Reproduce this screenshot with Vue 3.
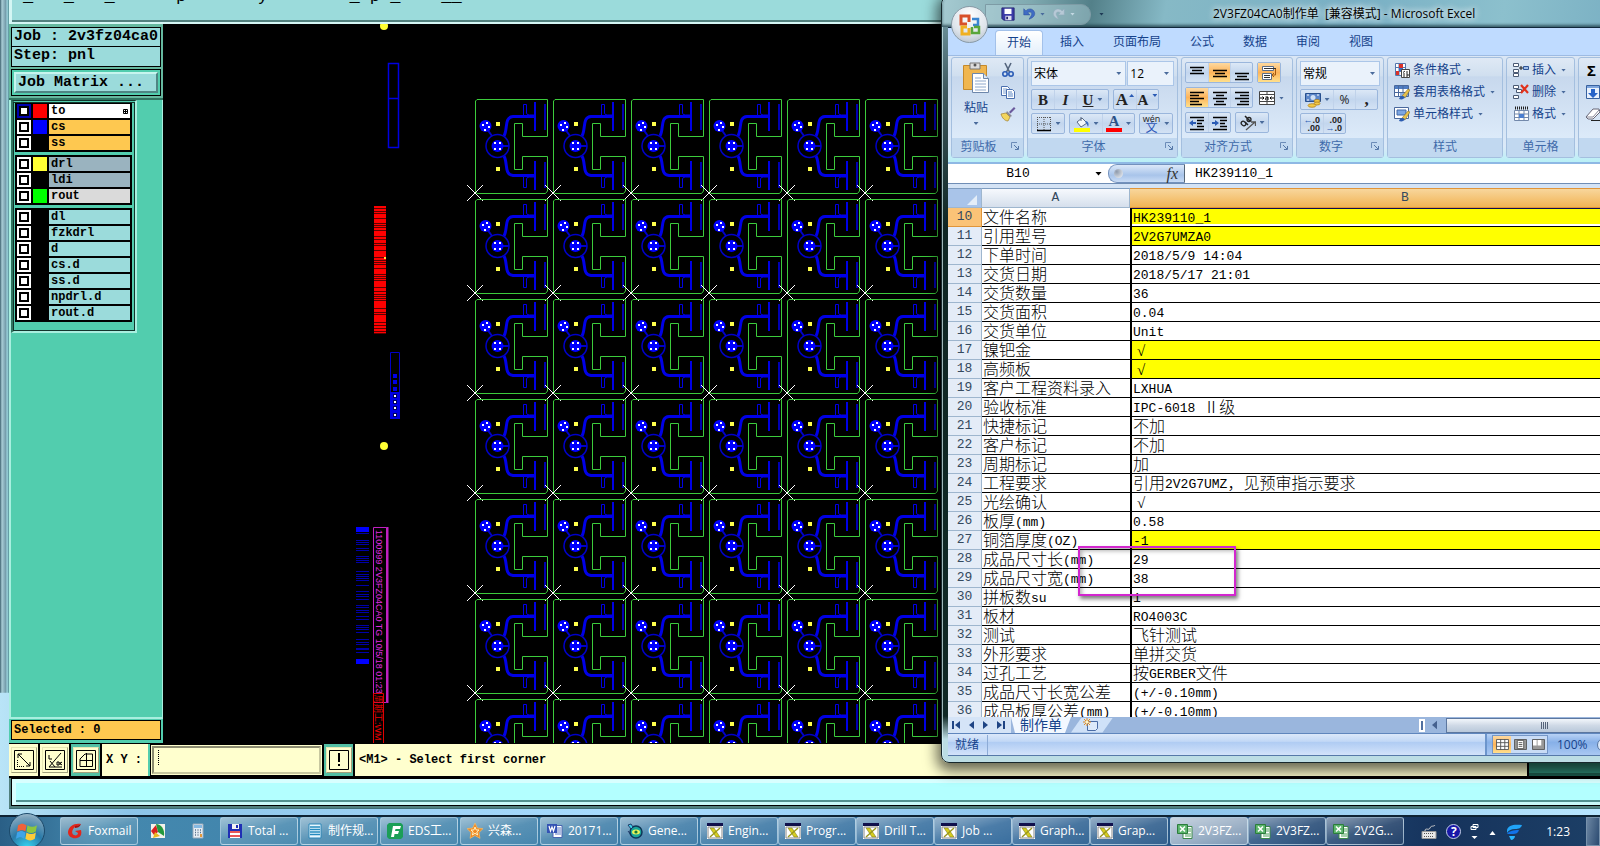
<script setup>
import { ref } from 'vue';

const layerGroups = [
  [
    { name: 'to', color: '#ff0000', tone: 'white', active: true },
    { name: 'cs', color: '#0000ff', tone: 'amber' },
    { name: 'ss', color: '#000000', tone: 'amber' },
  ],
  [
    { name: 'drl', color: '#ffff33', tone: 'slate' },
    { name: 'ldi', color: '#000000', tone: 'slate' },
    { name: 'rout', color: '#00ff00', tone: 'grey' },
  ],
  ['dl', 'fzkdrl', 'd', 'cs.d', 'ss.d', 'npdrl.d', 'rout.d'].map(name => ({
    name,
    color: '#000000',
    tone: 'aqua',
  })),
];

// panel array: 78 x 100 step and repeat
const cells = [];
for (let row = 0; row < 7; row++) {
  for (let col = 0; col < 6; col++) {
    cells.push({ x: 475 + col * 78, y: 99 + row * 100 });
  }
}

const redGaps = [208, 211, 213, 218, 223, 225, 227, 230, 236, 239, 243, 245, 250, 257, 260, 262, 264, 268, 274, 276, 278, 280, 287, 291, 294, 296, 298, 300, 308, 312, 314, 322, 325, 328, 331, 333];
const blueBars = [533, 540, 542, 544, 548, 550, 556, 558, 560, 562, 571, 574, 576, 578, 580, 585, 591, 594, 596, 599, 605, 607, 610, 612, 616, 619, 625, 627, 629, 632, 639, 642, 644, 648, 649, 652];

const rows = [
  ['文件名称', 'HK239110_1', true],
  ['引用型号', '2V2G7UMZA0', true],
  ['下单时间', '2018/5/9 14:04'],
  ['交货日期', '2018/5/17 21:01'],
  ['交货数量', '36'],
  ['交货面积', '0.04'],
  ['交货单位', 'Unit'],
  ['镍钯金', '√', true],
  ['高频板', '√', true],
  ['客户工程资料录入', 'LXHUA'],
  ['验收标准', 'IPC-6018 Ⅱ级'],
  ['快捷标记', '不加'],
  ['客户标记', '不加'],
  ['周期标记', '加'],
  ['工程要求', '引用2V2G7UMZ，见预审指示要求'],
  ['光绘确认', '√'],
  ['板厚(mm)', '0.58'],
  ['铜箔厚度(OZ)', '-1', true],
  ['成品尺寸长(mm)', '29'],
  ['成品尺寸宽(mm)', '38'],
  ['拼板数su', '1'],
  ['板材', 'RO4003C'],
  ['测试', '飞针测试'],
  ['外形要求', '单拼交货'],
  ['过孔工艺', '按GERBER文件'],
  ['成品尺寸长宽公差', '(+/-0.10mm)'],
  ['成品板厚公差(mm)', '(+/-0.10mm)'],
].map(([label, value, marked], index) => ({
  number: index + 10,
  label: split(label),
  value: split(value),
  marked,
}));

// latin runs are set half as wide as the ideographs
function split(text) {
  return text
    .match(/[\x20-\x7e]+|[^\x20-\x7e]+/g)
    .map(part => ({ part, half: /^[\x20-\x7e]/.test(part), check: part === '√' }));
}

const tabs = ['开始', '插入', '页面布局', '公式', '数据', '审阅', '视图'];

const styleCommands = [
  { icon: 'cond', text: '条件格式' },
  { icon: 'tablefmt', text: '套用表格格式' },
  { icon: 'cellstyle', text: '单元格样式' },
];
const cellCommands = [
  { icon: 'insert', text: '插入' },
  { icon: 'delete', text: '删除' },
  { icon: 'format', text: '格式' },
];

const tasks = [
  [{ icon: 'foxmail', text: 'Foxmail' }],
  [{ icon: 'pie', bare: true }],
  [{ icon: 'calc', bare: true }],
  [{ icon: 'disk', text: 'Total ...' }],
  [{ icon: 'list', text: '制作规...' }],
  [{ icon: 'eds', text: 'EDS工...' }],
  [{ icon: 'star', text: '兴森...' }],
  [{ icon: 'word', text: '20171...' }],
  [{ icon: 'gene', text: 'Gene...' }],
  ['Engin...', 'Progr...', 'Drill T...', 'Job ...', 'Graph...', 'Grap...'].map(text => ({ icon: 'xwin', text })),
  [
    { icon: 'excel', text: '2V3FZ...', current: true },
    { icon: 'excel', text: '2V3FZ...' },
    { icon: 'excel', text: '2V2G...' },
  ],
];

const xy = ref('');
const cellName = ref('B10');
const formula = ref('HK239110_1');
</script>

<template>
  <svg class="sprite" aria-hidden="true">
    <symbol id="save" viewBox="0 0 16 16"><path d="M1 1h14v14H3l-2-2z" fill="#3b3ba8" stroke="#24246e" /><path d="M4 2h8v6H4z" fill="#fff" /><path d="M5 10h7v5H5z" fill="#dde" /><path d="M6 11h2v3H6z" fill="#24246e" /></symbol>
    <symbol id="undo" viewBox="0 0 16 16"><path d="M2 2v7h7L6.500 6.500c3-2 6 0 4 3.500l-2.500 4c6-2 8-6 5.500-9.500S6 2 4.500 4.500z" fill="#3f6cc4" stroke="#2c4f9c" stroke-width=".6" /></symbol>
    <symbol id="redo" viewBox="0 0 16 16"><path d="M14 2v7H7l2.500-2.500c-3-2-6 0-4 3.500l2 4C2 12 0 8 2.500 4.500s7.500-2.500 9 0z" fill="#b7c9d6" stroke="#8fa9ba" stroke-width=".6" /></symbol>
    <symbol id="cut" viewBox="0 0 16 16"><path d="M5 1l4.500 9M11 1L6.500 10" stroke="#54657d" stroke-width="1.600" /><circle cx="5" cy="12" r="2.200" fill="none" stroke="#2a5bb5" stroke-width="1.600" /><circle cx="11" cy="12" r="2.200" fill="none" stroke="#2a5bb5" stroke-width="1.600" /></symbol>
    <symbol id="copy" viewBox="0 0 16 16"><path d="M1.500 2.500h6l2 2v7h-8z" fill="#fff" stroke="#4a6fae" /><path d="M3 5h4M3 7h5M3 9h5" stroke="#7c9fd0" /><path d="M6.500 5.500h6l2 2v7h-8z" fill="#fff" stroke="#4a6fae" /><path d="M8 8h4M8 10h5M8 12h5" stroke="#5b86c4" /></symbol>
    <symbol id="brush" viewBox="0 0 16 16"><path d="M9 6l5-5 1.500 1.500-5 5z" fill="#6b5a9c" /><path d="M7 5l5 5-2 1-4-4z" fill="#8a8a95" /><path d="M1 8l5-1 4 4-2 4c-3 0-6-3-7-7z" fill="#f2d55e" stroke="#a08030" stroke-width=".7" /></symbol>
    <symbol id="paste" viewBox="0 0 28 32"><path d="M1.500 3.500h23v24h-23z" fill="#f0b64f" stroke="#c58a2c" /><path d="M8 1h10v6H8z" fill="#dcdcdc" stroke="#777" /><circle cx="13" cy="3" r="1.500" fill="#555" /><path d="M10.500 11.500h11l5 5v14h-16z" fill="#fff" stroke="#6d87ab" /><path d="M21.500 11.500v5h5" fill="#dbe6f4" stroke="#6d87ab" /><path d="M13 16h6M13 19h11M13 22h11M13 25h11M13 28h11" stroke="#8fa9cc" /></symbol>
    <symbol id="borders" viewBox="0 0 16 16"><path d="M1.500 1v13M8 1v13M14.500 1v13M1 1.500h14M1 8h14" stroke="#555" stroke-dasharray="1 1" fill="none" /><path d="M1 14.500h14" stroke="#000" stroke-width="1.500" /></symbol>
    <symbol id="fill" viewBox="0 0 16 16"><path d="M3 6l5-4 5 5-6 4z" fill="#f4f7fb" stroke="#596b84" /><path d="M7 5V1" stroke="#596b84" /><path d="M12 5c3 1 3 4 2 6-1-2-1-4-3-5z" fill="#3a6cc0" /><path d="M0 12h16v4H0z" fill="#ff0" /></symbol>
    <symbol id="lines-top" viewBox="0 0 16 16"><path d="M1 2.500h14M3 5.500h10M1 8.500h14" stroke="#000" stroke-width="1.500" /></symbol>
    <symbol id="lines-mid" viewBox="0 0 16 16"><path d="M1 5.500h14M3 8.500h10M1 11.500h14" stroke="#000" stroke-width="1.500" /></symbol>
    <symbol id="lines-low" viewBox="0 0 16 16"><path d="M1 8.500h14M3 11.500h10M1 14.500h14" stroke="#000" stroke-width="1.500" /></symbol>
    <symbol id="lines-left" viewBox="0 0 16 16"><path d="M1 2.500h14M1 5.500h9M1 8.500h14M1 11.500h9M1 14.500h12" stroke="#000" stroke-width="1.500" /></symbol>
    <symbol id="lines-center" viewBox="0 0 16 16"><path d="M1 2.500h14M4 5.500h8M1 8.500h14M4 11.500h8M2 14.500h12" stroke="#000" stroke-width="1.500" /></symbol>
    <symbol id="lines-right" viewBox="0 0 16 16"><path d="M1 2.500h14M6 5.500h9M1 8.500h14M6 11.500h9M3 14.500h12" stroke="#000" stroke-width="1.500" /></symbol>
    <symbol id="wrap" viewBox="0 0 16 16"><path d="M1.500 1.500h11v4h-11zM1.500 8.500h9v6h-9z" fill="#fff" stroke="#5b6d88" /><path d="M3 3.500h12M3 10.500h6M3 12.500h6" stroke="#333" /><path d="M14.500 4v6h-3M13 8l-2 2 2 2" fill="none" stroke="#a55a10" /></symbol>
    <symbol id="merge" viewBox="0 0 16 16"><path d="M.5 1.500h15v13H.5zM0 4.500h16M0 11.500h16M8 1v3M8 12v3" fill="#fff" stroke="#444" /><path d="M1 8h4M15 8h-4M3.500 6.500L5 8 3.500 9.500M12.500 6.500L11 8l1.500 1.500" fill="none" stroke="#000" /><path d="M6.500 7h2.500v3H7.500q-1 0-1-1t1-1H9" fill="none" stroke="#000" /></symbol>
    <symbol id="outdent" viewBox="0 0 16 16"><path d="M1 2.500h14M8 5.500h7M8 8.500h5M8 11.500h7M1 14.500h14" stroke="#000" stroke-width="1.300" /><path d="M0 8l4-3v2h3v2H4v2z" fill="#2a5bb5" /></symbol>
    <symbol id="indent" viewBox="0 0 16 16"><path d="M1 2.500h14M8 5.500h7M8 8.500h5M8 11.500h7M1 14.500h14" stroke="#000" stroke-width="1.300" /><path d="M7 8L3 5v2H0v2h3v2z" fill="#2a5bb5" /></symbol>
    <symbol id="orient" viewBox="0 0 16 16"><path d="M6 15L15 7M11 7h4.500v4" fill="none" stroke="#555" stroke-width="1.300" /><ellipse cx="3.500" cy="8.500" rx="2" ry="2.500" fill="none" stroke="#222" stroke-width="1.300" transform="rotate(-45 3.500 8.500)" /><path d="M5 7l3 3M5 1l5 5" stroke="#222" stroke-width="1.500" /><circle cx="9" cy="4.500" r="2" fill="none" stroke="#222" stroke-width="1.300" /></symbol>
    <symbol id="money" viewBox="0 0 16 16"><path d="M.5 1.500h15v8H.5z" fill="#5c86c8" stroke="#28508f" /><circle cx="8" cy="5.500" r="2.500" fill="#cfe0f6" /><path d="M2 3h2M12 3h2M2 8h2" stroke="#fff" /><ellipse cx="12" cy="9" rx="3" ry="1.500" fill="#f4cb47" stroke="#a87818" stroke-width=".7" /><ellipse cx="12" cy="11.500" rx="3" ry="1.500" fill="#f4cb47" stroke="#a87818" stroke-width=".7" /><ellipse cx="7" cy="13.500" rx="4" ry="1.800" fill="#f4cb47" stroke="#a87818" stroke-width=".7" /></symbol>
    <symbol id="cond" viewBox="0 0 16 16"><path d="M1.500 1.500h10v12h-10zM5 1v13M8.500 1v13M1 5.500h11M1 9.500h11" fill="#fff" stroke="#5476ac" /><path d="M5 2h4v4H5zM2 9h3v4H2z" fill="#d9322a" /><path d="M5 6h4v3H5z" fill="#3469c4" /><path d="M7.500 7.500h8v8h-8z" fill="#fff" stroke="#444" /><path d="M9 10.500l2-1.500M9 12h2M12 10h2M12 12h2v2h-2M9 14h2" stroke="#222" fill="none" /></symbol>
    <symbol id="tablefmt" viewBox="0 0 16 16"><path d="M.5 1.500h14v11H.5z" fill="#fff" stroke="#49689c" /><path d="M1 2h13v3H1z" fill="#4f7cc2" /><path d="M4.500 2v10M9 2v10M1 8.500h13" stroke="#49689c" /><path d="M6 9h8v3H6z" fill="#8fb2e4" /><path d="M8 12l6-7 2 1-5 8z" fill="#e8c24a" stroke="#7c6322" stroke-width=".5" /><path d="M5 15c1-3 3-4 6-2-1 2-3 3-6 2z" fill="#2b5cb0" /></symbol>
    <symbol id="cellstyle" viewBox="0 0 16 16"><path d="M.5 1.500h14v11H.5z" fill="#fff" stroke="#49689c" /><path d="M3 4h9v5H3z" fill="#7ca6e2" stroke="#3f66a6" /><path d="M8 12l6-7 2 1-5 8z" fill="#e8c24a" stroke="#7c6322" stroke-width=".5" /><path d="M5 15c1-3 3-4 6-2-1 2-3 3-6 2z" fill="#2b5cb0" /></symbol>
    <symbol id="insert" viewBox="0 0 16 16"><path d="M.5 1.500h5v3h-5zM.5 7.500h5v3h-5zM.5 11.500h5v3h-5z" fill="#fff" stroke="#4a5a74" /><path d="M10.500 4.500h5v3h-5z" fill="#9dbdea" stroke="#2f5596" /><path d="M6 6h4M8 4v4" stroke="#222" /></symbol>
    <symbol id="delete" viewBox="0 0 16 16"><path d="M.5 1.500h5v3h-5zM3.500 5.500h5v3h-5zM.5 11.500h5v3h-5z" fill="#fff" stroke="#4a5a74" /><path d="M8 1l7 8M15 1L8 9" stroke="#e0321c" stroke-width="2.200" /></symbol>
    <symbol id="format" viewBox="0 0 16 16"><path d="M2 2h13" stroke="#222" stroke-dasharray="1 1" stroke-width="3" /><path d="M1.500 4.500h14v10h-14zM6 4v11M11 4v11M1 8h14M1 11.500h14" fill="#fff" stroke="#7389ab" /><path d="M6 8h5v4H6z" fill="#4c7fd0" /></symbol>
    <symbol id="filldown" viewBox="0 0 16 16"><path d="M1.500 1.500h13v13h-13z" fill="#e9f1fc" stroke="#38619f" /><path d="M2 2h12v2H2z" fill="#7ea5dd" /><path d="M6 5h4v4h3l-5 5-5-5h3z" fill="#2864c8" /></symbol>
    <symbol id="eraser" viewBox="0 0 16 16"><path d="M1 11l7-8h6l1 3-7 7H3z" fill="#fff" stroke="#667" /><path d="M2 11h6l6-7" fill="none" stroke="#889" /><path d="M6 14.500h10" stroke="#222" /></symbol>
    <symbol id="launcher" viewBox="0 0 8 8"><path d="M.5 6V.5H6" fill="none" stroke="#6c8cb8" /><path d="M3 3l4 4M7.500 4v3.500H4" fill="none" stroke="#5577a8" /></symbol>
    <symbol id="foxmail" viewBox="0 0 16 16"><path d="M14 1C7 0 2 3 1 9c0 5 5 7 9 6 4-1 5-4 4-8L8 8l3 2c0 2-2 3-4 2-3-1-2-6 1-8z" fill="#e1261c" /><path d="M8 3c2 0 4-1 6-2-1 3-4 4-6 4z" fill="#a81010" /></symbol>
    <symbol id="pie" viewBox="0 0 16 16"><path d="M1 1h14v14H1z" fill="#f4f2ea" /><path d="M1 8L6 2l2 7-4 3z" fill="#d82020" /><path d="M6 1c5 0 9 5 8 12L8 9z" fill="#24983c" /><path d="M5 9l5 4-7 2z" fill="#e9b820" /></symbol>
    <symbol id="calc" viewBox="0 0 16 16"><path d="M3 1h10v14H3z" fill="#e8eef4" stroke="#9ab" /><path d="M4 2h8v3H4z" fill="#86b9e2" /><path d="M5 7h1M7.500 7h1M10 7h1M5 9.500h1M7.500 9.500h1M10 9.500h1M5 12h1M7.500 12h1" stroke="#58708a" stroke-width="1.500" /><path d="M10 11h2v3h-2z" fill="#e59a3a" /></symbol>
    <symbol id="disk" viewBox="0 0 16 16"><path d="M1 1h14v14H1z" fill="#1f2fb4" /><path d="M5 1h7v5H5z" fill="#f3f3f3" /><path d="M9 2h2v3H9z" fill="#1f2fb4" /><path d="M3 8h10v7H3z" fill="#fff" /><path d="M3 9h10M3 13h10" stroke="#e02020" stroke-width="1.500" /></symbol>
    <symbol id="list" viewBox="0 0 16 16"><path d="M2 1h12v14H2z" fill="#e9f8ff" stroke="#2c87b8" /><path d="M3 4h10M3 6.500h10M3 9h10M3 11.500h10" stroke="#258abf" stroke-width="1.500" /></symbol>
    <symbol id="eds" viewBox="0 0 16 16"><path d="M2 0h12l2 2v12l-2 2H2l-2-2V2z" fill="#1b9e57" /><path d="M4 14L6 3h8l-1 3H8.500L8 8h4l-1 3H7.500L7 14z" fill="#fff" /></symbol>
    <symbol id="star" viewBox="0 0 16 16"><path d="M8 0l2.400 5 5.600.6-4 4 1 5.800L8 12.600 3 15.400l1-5.800-4-4L5.600 5z" fill="#f08a24" stroke="#ffc46a" stroke-width=".6" /><path d="M8 4l1.200 3H12l-2.200 2 .8 3L8 10.300 5.400 12l.8-3L4 7h2.800z" fill="none" stroke="#fff2c0" /></symbol>
    <symbol id="word" viewBox="0 0 16 16"><path d="M6 2.500h9v12H6z" fill="#fff" stroke="#4865b0" /><path d="M10 5h4M10 7h4M10 9h4M8 11h6" stroke="#5e7ac4" /><path d="M0 1h10v9H0z" fill="#3453b4" /><path d="M2 3l1.500 5L5 4l1.500 4L8 3" fill="none" stroke="#fff" stroke-width="1.200" /></symbol>
    <symbol id="gene" viewBox="0 0 16 16"><circle cx="9" cy="9" r="6" fill="#1ba59a" stroke="#0d3558" stroke-width="1.500" /><ellipse cx="9" cy="9" rx="4" ry="2.500" fill="#e9f25a" /><circle cx="9" cy="9" r="1.600" fill="#137a3a" /><path d="M1 2l3-1 2 3-2 2zM1 8l3 4" fill="#3ecfe8" stroke="#125" stroke-width=".8" /></symbol>
    <symbol id="xwin" viewBox="0 0 16 16"><path d="M0 0h16v16H0z" fill="#fff" /><path d="M0 0h16v3H0z" fill="#10104c" /><path d="M1 4h14v11H1z" fill="#fff" stroke="#888" /><path d="M3 5h4l6 9H9z" fill="#d5cd20" stroke="#6c6a10" stroke-width=".5" /><path d="M13 5L3 14" stroke="#99961c" stroke-width="1.400" /></symbol>
    <symbol id="excel" viewBox="0 0 16 16"><path d="M6 3.500h9v12H6z" fill="#fff" stroke="#3b8a4a" /><path d="M10 6h4M10 8h4M8 11h6M8 13h6" stroke="#4ea35c" /><path d="M.5 1.500h10v9H.5z" fill="#5cb56c" stroke="#2c7c3c" /><path d="M3 3.500l5 5M8 3.500l-5 5" stroke="#fff" stroke-width="1.600" /></symbol>
  </svg>

  <div class="desktop">
    <section class="cad">
      <header class="cad__title">
        <pre>_   _   _      p       y        _ p _    __</pre>
      </header>
      <div class="cad__main">
        <aside class="side">
          <div class="side__job">
            <p>Job : 2v3fz04ca0</p>
            <p>Step: pnl</p>
            <div class="side__matrix"><button type="button">Job Matrix ...</button></div>
          </div>
          <div class="side__well">
            <div class="layers">
              <div v-for="(group, index) in layerGroups" :key="index" class="layers__group">
                <label v-for="layer in group" :key="layer.name" class="layer">
                  <input type="checkbox" :class="{ active: layer.active }">
                  <span class="layer__swatch" :style="{ background: layer.color }"></span>
                  <span class="layer__name" :class="`layer__name--${layer.tone}`">
                    {{ layer.name }}
                    <svg v-if="layer.active" width="5" height="5" viewBox="0 0 5 5"><path d="M.5.5h4v4h-4zM2.500 0v5M0 2.500h5" fill="none" stroke="#000" /></svg>
                  </span>
                </label>
              </div>
            </div>
          </div>
          <p class="side__selected">Selected : 0</p>
        </aside>

        <svg class="board">
          <defs>
            <g id="half-unit" fill="none" stroke="#0000e6">
              <path d="M29 37C33 30 29 18 38 17.500H60" stroke-width="3" />
              <path d="M48.500 18V5.500h3V14q0 2 3 2h6" />
              <path d="M60 3v29" stroke-width="2" />
              <path d="M70 5v26" stroke-width="2" stroke="#0000b4" />
            </g>
            <g id="unit">
              <path d="M2 .5H72.500V37.500H47.500V24.500H39.500V70.500H47.500V57.500H72.500V92L70.500 94.500H2L.5 92V2z" fill="none" stroke="#3ccb3c" />
              <use href="#half-unit" />
              <use href="#half-unit" transform="matrix(1 0 0 -1 0 94)" />
              <path d="M12 30l5 7M22 47h12" stroke="#0000c8" stroke-width="2" />
              <circle cx="22.500" cy="47" r="11.500" fill="none" stroke="#0000c8" stroke-width="1.500" />
              <circle cx="22.500" cy="47" r="6" fill="#00f" />
              <circle cx="10.500" cy="27" r="6" fill="#00f" />
              <path d="M19 43h2v2h-2zM24 43h2v2h-2zM19 49h2v2h-2zM24 49h2v2h-2zM7 25h2v2H7zM11 23h2v2h-2zM13 27h2v2h-2zM9 30h2v2H9z" fill="#fff" />
              <path d="M21 23h4v4h-4zM21 68h4v4h-4z" fill="#ffff4c" />
              <path d="M-8 86L8 102M-8 102L8 86" stroke="#fff" />
            </g>
          </defs>
          <g transform="translate(-163 -24)">
            <circle cx="384" cy="26" r="4" fill="#ffff33" />
            <path d="M388.500 63.500h10v84h-10zM388 98.500h11" fill="none" stroke="#0000e0" stroke-width="1.500" />
            <path d="M374 206h12v128h-12z" fill="#f00" />
            <path v-for="y in redGaps" :key="y" :d="`M374 ${y}.5h12`" stroke="#5c0000" />
            <path d="M384 257h2v2h-2z" fill="#ffe040" />
            <path d="M390.500 352.500h9v66h-9z" fill="none" stroke="#0000c8" />
            <path d="M390 392h10v27h-10zM393 374h4v4h-4zM393 380h4v4h-4zM393 387h4v4h-4z" fill="#0000e6" />
            <path d="M393 394h4v4h-4zM393 400h4v4h-4zM393 406h4v4h-4zM393 413h4v4h-4z" fill="#000060" />
            <path d="M394 395h2v2h-2zM394 401h2v2h-2zM394 407h2v2h-2zM394 414h2v2h-2z" fill="#fff" />
            <circle cx="384" cy="446" r="4" fill="#ffff33" />
            <path d="M356 527h13v5h-13zM356 659h13v5h-13z" fill="#0000ff" />
            <path v-for="y in blueBars" :key="y" :d="`M356 ${y}.5h13`" stroke="#0000a8" />
            <path d="M373.500 527.500h13v175h-13z" fill="none" stroke="#c020c0" />
            <path d="M387.500 527v176" stroke="#c020c0" stroke-width="2" />
            <text class="board__text" transform="translate(376 530) rotate(90)" fill="#e02ce0">1100999 2V3FZ04CA0 TG 10/5/18 01:23</text>
            <path d="M373.500 693.500h10v60h-10z" fill="none" stroke="#e00000" />
            <text class="board__text" transform="translate(375 695) rotate(90)" fill="#f00000">周期工:WM</text>
            <use v-for="cell in cells" :key="`${cell.x}-${cell.y}`" href="#unit" :x="cell.x" :y="cell.y" />
          </g>
        </svg>
      </div>

      <div class="cad__tools">
        <button type="button" class="tool" aria-label="Zoom">
          <svg viewBox="0 0 20 20"><path d="M.5.5h19v19H.5z" fill="none" stroke="#000" /><path d="M4 4l12 12M4 8V4h4M16 12v4h-4" fill="none" stroke="#000" /><path d="M3 16.500h8M3.500 10v7" stroke="#000" stroke-dasharray="1 1" /></svg>
        </button>
        <button type="button" class="tool" aria-label="Angle">
          <svg viewBox="0 0 20 20"><path d="M.5.5h19v19H.5z" fill="none" stroke="#000" /><path d="M16 3L4 17h13M4 5v4h3M5 11l5 6M12 12h2v3h-2zM15 12v3M17 12l-2 1.500 2 1.500" fill="none" stroke="#000" /></svg>
        </button>
        <button type="button" class="tool tool--on" aria-label="Grid">
          <svg viewBox="0 0 20 20"><path d="M.5.5h19v19H.5z" fill="none" stroke="#000" /><path d="M4 9l5-5h7.500v12.500H4zM4 10.500h12.500M10.500 3v14" fill="none" stroke="#000" /></svg>
        </button>
        <label class="cad__xy" for="xy">X Y :</label>
        <div class="cad__entry"><input id="xy" v-model="xy" type="text"><span></span></div>
        <button type="button" class="tool tool--on" aria-label="Alert">
          <svg viewBox="0 0 20 20"><path d="M.5.5h19v19H.5z" fill="none" stroke="#000" /><path d="M9 3h2v9H9zM9 14h2v2H9z" /></svg>
        </button>
        <p class="cad__hint">&lt;M1&gt; - Select first corner</p>
        <div class="cad__corner"></div>
      </div>
      <div class="cad__message"><div></div></div>
    </section>

    <section class="excel">
      <header class="excel__title">
        <div class="qat">
          <button type="button" aria-label="Save"><svg class="i16"><use href="#save" /></svg></button>
          <button type="button" aria-label="Undo"><svg class="i16"><use href="#undo" /></svg><i class="drop"></i></button>
          <button type="button" aria-label="Redo"><svg class="i16"><use href="#redo" /></svg><i class="drop drop--pale"></i></button>
        </div>
        <i class="drop drop--bar"></i>
        <h1>2V3FZ04CA0制作单&nbsp; [兼容模式] - Microsoft Excel</h1>
      </header>
      <button type="button" class="orb" aria-label="Office">
        <svg viewBox="0 0 24 24" fill="none" stroke-width="3">
          <path d="M11 9V3H3v8h6" stroke="#d8502a" /><path d="M14 6h6v6h-5" stroke="#3b86d0" stroke-width="2.500" /><path d="M9 14H4v7h7v-6" stroke="#f0b020" /><path d="M14 14v6h7v-6h-5" stroke="#59a63a" stroke-width="2.500" />
        </svg>
      </button>

      <div class="excel__body">
        <nav class="tabs">
          <a v-for="(tab, index) in tabs" :key="tab" href="#" :class="{ on: index === 0 }">{{ tab }}</a>
        </nav>

        <div class="ribbon">
          <section class="group group--clip">
            <div class="group__body group__body--clip">
              <button type="button" class="paste"><svg><use href="#paste" /></svg>粘贴<i class="drop"></i></button>
              <div class="stack">
                <button type="button" aria-label="剪切"><svg class="i16"><use href="#cut" /></svg></button>
                <button type="button" aria-label="复制"><svg class="i16"><use href="#copy" /></svg></button>
                <button type="button" aria-label="格式刷"><svg class="i16"><use href="#brush" /></svg></button>
              </div>
            </div>
            <h2 class="launch">剪贴板<svg><use href="#launcher" /></svg></h2>
          </section>

          <section class="group group--font">
            <div class="group__body">
              <div class="line line--tall">
                <div class="pick pick--face"><select aria-label="字体"><option>宋体</option></select><i class="drop"></i></div>
                <div class="pick pick--size"><select aria-label="字号"><option>12</option></select><i class="drop"></i></div>
              </div>
              <div class="line">
                <div class="set">
                  <button type="button" class="serif"><b>B</b></button>
                  <button type="button" class="serif"><em>I</em></button>
                  <button type="button" class="serif wide"><u>U</u><i class="drop"></i></button>
                </div>
                <div class="set">
                  <button type="button" class="serif big">A<i class="tick"></i></button>
                  <button type="button" class="serif">A<i class="tick tick--down"></i></button>
                </div>
              </div>
              <div class="line">
                <div class="set"><button type="button" class="wide" aria-label="边框"><svg class="i16"><use href="#borders" /></svg><i class="drop"></i></button></div>
                <div class="set">
                  <button type="button" class="wide" aria-label="填充颜色"><svg class="i16"><use href="#fill" /></svg><i class="drop"></i></button>
                  <button type="button" class="wide serif"><span class="ink">A</span><i class="drop"></i></button>
                </div>
                <div class="set"><button type="button" class="wide"><span class="wen"><small>wén</small>文</span><i class="drop"></i></button></div>
              </div>
            </div>
            <h2 class="launch">字体<svg><use href="#launcher" /></svg></h2>
          </section>

          <section class="group group--align">
            <div class="group__body group__body--align">
              <div class="line">
                <div class="set">
                  <button type="button" aria-label="顶端对齐"><svg class="i16"><use href="#lines-top" /></svg></button>
                  <button type="button" class="hot" aria-label="垂直居中"><svg class="i16"><use href="#lines-mid" /></svg></button>
                  <button type="button" aria-label="底端对齐"><svg class="i16"><use href="#lines-low" /></svg></button>
                </div>
                <div class="set"><button type="button" class="hot" aria-label="自动换行"><svg class="i16"><use href="#wrap" /></svg></button></div>
              </div>
              <div class="line">
                <div class="set">
                  <button type="button" class="hot" aria-label="左对齐"><svg class="i16"><use href="#lines-left" /></svg></button>
                  <button type="button" aria-label="居中"><svg class="i16"><use href="#lines-center" /></svg></button>
                  <button type="button" aria-label="右对齐"><svg class="i16"><use href="#lines-right" /></svg></button>
                </div>
                <button type="button" class="plain" aria-label="合并后居中"><svg class="i16"><use href="#merge" /></svg><i class="drop"></i></button>
              </div>
              <div class="line">
                <div class="set">
                  <button type="button" aria-label="减少缩进"><svg class="i16"><use href="#outdent" /></svg></button>
                  <button type="button" aria-label="增加缩进"><svg class="i16"><use href="#indent" /></svg></button>
                </div>
                <div class="set"><button type="button" class="wide" aria-label="方向"><svg class="i16"><use href="#orient" /></svg><i class="drop"></i></button></div>
              </div>
            </div>
            <h2 class="launch">对齐方式<svg><use href="#launcher" /></svg></h2>
          </section>

          <section class="group group--number">
            <div class="group__body">
              <div class="line line--tall">
                <div class="pick pick--kind"><select aria-label="数字格式"><option>常规</option></select><i class="drop"></i></div>
              </div>
              <div class="line">
                <div class="set">
                  <button type="button" class="wide" aria-label="会计数字格式"><svg class="i16"><use href="#money" /></svg><i class="drop"></i></button>
                  <button type="button">%</button>
                  <button type="button" class="serif big"><b>,</b></button>
                </div>
              </div>
              <div class="line">
                <div class="set">
                  <button type="button" class="digits"><span><em>←</em>.0</span><span>.00</span></button>
                  <button type="button" class="digits"><span>.00</span><span><em>→</em>.0</span></button>
                </div>
              </div>
            </div>
            <h2 class="launch">数字<svg><use href="#launcher" /></svg></h2>
          </section>

          <section class="group group--styles">
            <div class="group__body group__body--list">
              <button v-for="item in styleCommands" :key="item.text" type="button" class="command">
                <svg class="i16"><use :href="`#${item.icon}`" /></svg>{{ item.text }}<i class="drop"></i>
              </button>
            </div>
            <h2>样式</h2>
          </section>

          <section class="group group--cells">
            <div class="group__body group__body--list">
              <button v-for="item in cellCommands" :key="item.text" type="button" class="command">
                <svg class="i16"><use :href="`#${item.icon}`" /></svg>{{ item.text }}<i class="drop"></i>
              </button>
            </div>
            <h2>单元格</h2>
          </section>

          <section class="group group--edit">
            <div class="group__body group__body--list">
              <button type="button" class="command sum"><b>Σ</b></button>
              <button type="button" class="command" aria-label="填充"><svg class="i16"><use href="#filldown" /></svg></button>
              <button type="button" class="command" aria-label="清除"><svg class="i16"><use href="#eraser" /></svg></button>
            </div>
            <h2>&nbsp;</h2>
          </section>
        </div>

        <div class="formula">
          <input v-model="cellName" class="formula__name" type="text" aria-label="名称框">
          <i class="drop drop--black"></i>
          <div class="formula__fx"><i></i><span>fx</span></div>
          <input v-model="formula" class="formula__text" type="text" aria-label="编辑栏">
        </div>

        <div class="sheet">
          <table>
            <thead>
              <tr><th class="corner"><svg viewBox="0 0 10 10"><path d="M10 0v10H0z" fill="#e4edf8" /></svg></th><th class="col-a">A</th><th class="col-b">B</th></tr>
            </thead>
            <tbody>
              <tr v-for="(row, index) in rows" :key="row.number" :class="{ marked: row.marked, picked: index === 0 }">
                <th>{{ row.number }}</th>
                <td><div><span v-for="(run, i) in row.label" :key="i" :class="{ half: run.half }">{{ run.part }}</span></div></td>
                <td><div><span v-for="(run, i) in row.value" :key="i" :class="{ half: run.half, check: run.check }">{{ run.part }}</span></div></td>
              </tr>
            </tbody>
          </table>
          <div class="callout"></div>
        </div>

        <div class="sheetbar">
          <div class="sheetbar__nav">
            <svg viewBox="0 0 60 10"><path d="M6 1v8H4V1zM12 1v8L7 5zM26 1v8l-5-4zM35 1v8l5-4zM49 1v8l5-4zM55 1v8h2V1z" fill="#1f4484" /></svg>
          </div>
          <a href="#" class="sheetbar__tab">制作单</a>
          <span class="sheetbar__new"><svg viewBox="0 0 16 14"><path d="M4.500 3.500h10v7l-2 2h-8z" fill="#dce9fa" stroke="#4a6ba5" /><path d="M4 0v8M0 4h8M1 1l6 6M7 1L1 7" stroke="#e08a1e" /><circle cx="4" cy="4" r="1.500" fill="#fff5c8" /></svg></span>
          <div class="sheetbar__split"></div>
          <svg class="sheetbar__left" viewBox="0 0 6 10"><path d="M6 0v10L0 5z" fill="#45618f" /></svg>
          <div class="sheetbar__thumb"><i></i></div>
        </div>

        <footer class="status">
          <span class="status__ready">就绪</span>
          <div class="status__right">
            <div class="views">
              <button type="button" class="hot" aria-label="普通"><svg viewBox="0 0 14 12"><path d="M.5.5h13v11H.5zM5 0v12M9.500 0v12M0 4h14M0 8h14" fill="#fff" stroke="#555" /></svg></button>
              <button type="button" aria-label="页面布局"><svg viewBox="0 0 14 12"><path d="M.5.5h13v11H.5z" fill="#999" stroke="#555" /><path d="M3.500 1.500h7v9h-7z" fill="#fff" stroke="#555" /><path d="M5 4h4M5 6h4M5 8h4" stroke="#555" /></svg></button>
              <button type="button" aria-label="分页预览"><svg viewBox="0 0 14 12"><path d="M.5.5h13v11H.5z" fill="#999" stroke="#555" /><path d="M1 1h4v6H1zM6 1h4v6H6z" fill="#fff" /></svg></button>
            </div>
            <span>100%</span>
            <i class="status__minus"></i>
          </div>
        </footer>
      </div>
    </section>

    <footer class="taskbar">
      <button type="button" class="start" aria-label="Start">
        <svg viewBox="0 0 22 22"><path d="M2 5c3-2 5-2 8 0L9 11c-3-2-5-1-8 0z" fill="#f0623a" /><path d="M11 5c3 2 6 2 9 0l-1 6c-3 2-6 2-9 0z" fill="#8cc63e" /><path d="M1 12c3-2 5-2 8 0l-1 6c-3-2-5-2-8 0z" fill="#3fa4e8" /><path d="M10 12c3 2 6 2 9 0l-1 6c-3 2-6 2-9 0z" fill="#fccb3a" /></svg>
      </button>
      <div class="tasks">
        <div v-for="(group, index) in tasks" :key="index" class="tasks__group">
          <button
            v-for="(task, i) in group"
            :key="i"
            type="button"
            class="task"
            :class="{ 'task--bare': task.bare, 'task--current': task.current }"
            :aria-label="task.text ?? task.icon"
          >
            <svg class="i16"><use :href="`#${task.icon}`" /></svg>{{ task.text }}
          </button>
        </div>
      </div>
      <div class="tray">
        <svg class="i16" viewBox="0 0 16 16"><path d="M1 7.500h14v7H1z" fill="#e8e8e8" stroke="#999" /><path d="M3 9.500h10M3 12.500h10" stroke="#555" stroke-dasharray="1 1" /><path d="M4 7c0-4 4 0 5-3s4-1 5-3" fill="none" stroke="#ccc" /></svg>
        <span class="tray__help">?</span>
        <svg class="tray__small" viewBox="0 0 8 16"><path d="M2.500.5h5v3h-5zM.5 2.500h5v3h-5z" fill="#24466e" stroke="#fff" /><path d="M1 12h6l-3 3z" fill="#fff" /></svg>
        <svg class="tray__small" viewBox="0 0 8 16"><path d="M1 11h6L4 7z" fill="#fff" /></svg>
        <svg class="i16" viewBox="0 0 16 16"><path d="M1 6C2 1 8 0 16 1c-1 3-3 4-7 4-4 0-6 1-8 4z" fill="#20a4f8" /><path d="M1 10c2-3 6-4 12-4-1 3-3 4-6 4z" fill="#1272e8" /><path d="M3 12h6c0 2-2 4-4 4z" fill="#28b6ff" /></svg>
        <time>1:23</time>
      </div>
      <button type="button" class="peek" aria-label="Show desktop"></button>
    </footer>
  </div>
</template>

<style>
body {
  overflow: hidden;
}
</style>

<style scoped>
* {
  box-sizing: border-box;
}

p, h1, h2, pre {
  margin: 0;
}

h1, h2 {
  font-weight: 400;
}

button, input, select {
  margin: 0;
  padding: 0;
  border: 0;
  border-radius: 0;
  background: none;
  color: inherit;
  font: inherit;
  appearance: none;
  outline: none;
}

a {
  color: inherit;
  text-decoration: none;
}

.sprite {
  position: absolute;
  width: 0;
  height: 0;
}

.i16 {
  flex: none;
  width: 16px;
  height: 16px;
}

.desktop {
  position: relative;
  display: flex;
  flex-direction: column;
  height: 100vh;
  overflow: hidden;
  background: #9ed3f5;
  color: #000;
  font: 12px/16px "Open Sans", "Noto Sans CJK SC", sans-serif;
}

/* CAD window */
.cad {
  display: flex;
  flex: 1;
  flex-direction: column;
  min-height: 0;
  padding: 0 0 6px 9px;
  background:
    linear-gradient(90deg, #3b5f6c, #a9cdd6 2px, #6f97a6 6px, #a5dce6 7px, #4f8a90) left / 9px 85% no-repeat,
    linear-gradient(90deg, #b9e4f7, #8cc4e8 8%, #a9dcff 40%, #86bfe8 70%, #b8e6ff);
  background-position: left top, left top;
  font: bold 12px/16px "Liberation Mono", monospace;
}

.cad__title {
  flex: none;
  height: 24px;
  padding-left: 11px;
  overflow: hidden;
  border: solid #d4f6f4;
  border-width: 0 0 2px 3px;
  background: #9bdbdb;
  box-shadow: inset 0 -2px #52807e;
}

.cad__title pre {
  margin-top: -13px;
  font: 17px/20px "Liberation Mono", monospace;
}

.cad__main {
  display: flex;
  flex: 1;
  min-height: 0;
  background: #000;
}

.side {
  display: flex;
  flex: none;
  flex-direction: column;
  width: 154px;
  background: #52cdae;
}

.side__job {
  padding: 3px 2px 0;
  border-bottom: 2px solid #2f7460;
  background: #66b89f;
}

.side__job p {
  height: 20px;
  padding-left: 2px;
  overflow: hidden;
  border: 1px solid #000;
  background: #9bdbdb;
  font-size: 15px;
  line-height: 18px;
  white-space: nowrap;
}

.side__job p + p {
  border-top: 0;
}

.side__matrix {
  height: 27px;
  margin: 2px 0;
  padding: 2px;
  border: 1px solid #000;
  background: #52cdae;
}

.side__matrix button {
  width: 100%;
  height: 21px;
  padding-left: 2px;
  border: 2px solid;
  border-color: #c7f5ee #4e8583 #4e8583 #c7f5ee;
  background: #9bdbdb;
  font-size: 15px;
  line-height: 17px;
  text-align: left;
}

.side__well {
  flex: 1;
  min-height: 0;
  border: solid #a8efdf;
  border-width: 0 1px 2px 2px;
}

.layers {
  display: flex;
  flex-direction: column;
  gap: 3px;
  width: 126px;
  padding: 1px 3px 9px 1px;
  border: solid;
  border-width: 1px 2px 2px 3px;
  border-color: #12352c #a8efdf #a8efdf #2f7460;
  outline: 1px solid #12352c;
  outline-offset: -3px;
}

.layers__group {
  padding: 1px 2px;
  background: #000;
}

.layer {
  display: flex;
  align-items: center;
  gap: 2px;
  height: 16px;
}

.layer input {
  width: 14px;
  height: 14px;
  border: 2px solid #fff;
  background: linear-gradient(#fff, #fff) center / 6px 6px no-repeat, #000;
}

.layer input.active {
  border-color: #0000b0;
}

.layer__swatch {
  width: 14px;
  height: 14px;
}

.layer__name {
  display: flex;
  flex: 1;
  align-items: center;
  justify-content: space-between;
  height: 14px;
  padding: 0 2px;
  background: #9bdbdb;
  line-height: 14px;
}

.layer__name--white {
  background: #fff;
}

.layer__name--amber {
  background: #fec850;
}

.layer__name--slate {
  background: #9ab3bf;
}

.layer__name--grey {
  background: #dadada;
}

.side__selected {
  height: 20px;
  margin: 1px 2px 3px;
  padding-left: 2px;
  border: 1px solid #000;
  background: #fec850;
  line-height: 18px;
}

.board {
  flex: 1;
  min-width: 0;
  height: 100%;
}

.board__text {
  font: 9px "Liberation Sans", "Noto Sans CJK SC", sans-serif;
}

.cad__tools {
  display: flex;
  flex: none;
  height: 35px;
  border: solid #000;
  border-width: 1px 0 2px;
  background: #ffffce;
}

.tool {
  flex: none;
  width: 31px;
  padding: 3px 2px;
  border-right: 2px solid #000;
}

.tool svg {
  display: block;
  width: 26px;
  height: 26px;
  padding: 2px;
  border: 1px solid;
  border-color: #e8e8b4 #a0a07c #a0a07c #e8e8b4;
  background: #ffffce;
}

.tool--on {
  background: #52bfa4;
}

.cad__xy {
  width: 48px;
  padding-left: 4px;
  border-right: 2px solid #52cdae;
  line-height: 32px;
  white-space: pre;
}

.cad__entry {
  position: relative;
  width: 174px;
  padding: 1px;
  border: 1px solid #000;
  border-right: 2px solid #000;
}

.cad__entry input {
  width: 100%;
  height: 100%;
  padding-left: 12px;
  border: 2px solid;
  border-color: #8c8c70 #c8c8a0 #c8c8a0 #8c8c70;
}

.cad__entry span {
  position: absolute;
  top: 5px;
  left: 7px;
  height: 15px;
  border-left: 1px dotted #000;
}

.cad__hint {
  flex: 1;
  padding-left: 4px;
  line-height: 32px;
}

.cad__corner {
  width: 73px;
  border-left: 2px solid #000;
  background: #2f8a75;
  box-shadow: inset 0 -3px #1c5a4c;
}

.cad__message {
  flex: none;
  height: 31px;
  padding: 0 0 2px 2px;
  border-bottom: 1px solid #3c6e74;
  background: #52807e;
}

.cad__message div {
  height: 100%;
  border: solid #000;
  border-width: 1px 0 1px 1px;
  background: #b3ffff;
  box-shadow: inset 4px 4px #d8ffff, inset 0 -3px #c8f8f8, inset 0 -5px #52908f;
}

/* Excel window */
.excel {
  position: absolute;
  top: -4px;
  right: -90px;
  bottom: 83px;
  left: 941px;
  display: flex;
  flex-direction: column;
  padding: 0 8px 6px 6px;
  border: 1px solid #17282c;
  border-radius: 8px;
  background: linear-gradient(#7ba5b0, #3f5a60 12%, #0f2624 30%, #102825 94%, #bcdde4 97%);
  box-shadow: 0 4px 14px 4px rgba(0, 0, 0, 0.6), inset 1px 1px rgba(220, 245, 250, 0.7);
  color: #15428b;
}

.excel__title {
  display: flex;
  flex: none;
  align-items: center;
  height: 30px;
  margin: 0 -8px 0 -6px;
  padding: 4px 8px 0 43px;
  border-radius: 8px 8px 0 0;
  background: linear-gradient(100deg, #a6cbd2, #7fa9b0 12%, #538089 20%, #86b9c6 30%, #78afc4 55%, #8cc0cd 75%, #6fa6bd);
  box-shadow: inset 0 -2px 3px rgba(20, 50, 60, 0.7);
}

.excel__title h1 {
  margin-left: 109px;
  color: #000;
  font-size: 12px;
  text-shadow: 0 0 6px #fff, 0 0 8px #fff;
  white-space: nowrap;
}

.qat {
  display: flex;
  align-items: center;
  gap: 7px;
  width: 106px;
  height: 21px;
  padding-left: 15px;
  border: 1px solid #7d9ba5;
  border-radius: 0 10px 10px 0;
  background: rgba(190, 220, 228, 0.4);
}

.qat button {
  display: flex;
  align-items: center;
  gap: 4px;
}

.qat .i16 {
  width: 14px;
  height: 14px;
}

.drop {
  flex: none;
  width: 5px;
  height: 3px;
  background: #4a6b9c;
  clip-path: polygon(0 0, 100% 0, 50% 100%);
}

.drop--pale {
  background: #c2d8e2;
}

.drop--bar {
  margin-left: 8px;
  background: #1e3a55;
}

.drop--black {
  width: 7px;
  height: 4px;
  margin-right: 6px;
  background: #000;
}

.orb {
  position: absolute;
  top: 9px;
  left: 9px;
  display: grid;
  place-items: center;
  width: 37px;
  height: 37px;
  border: 1px solid #8899a5;
  border-radius: 50%;
  background: radial-gradient(circle at 50% 25%, #fff, #dde3ea 60%, #aab7c4);
}

.orb svg {
  width: 24px;
  height: 24px;
}

.excel__body {
  display: flex;
  flex: 1;
  flex-direction: column;
  min-height: 0;
  border-top: 1px solid #10283c;
  background: #bfdbff;
}

.tabs {
  display: flex;
  flex: none;
  align-items: flex-end;
  height: 27px;
  padding-left: 47px;
}

.tabs a {
  height: 25px;
  padding: 0 15px 0 14px;
  line-height: 24px;
}

.tabs a.on {
  padding: 0 11px;
  margin-right: 3px;
  border: 1px solid #a3c1ea;
  border-bottom: 0;
  border-radius: 4px 4px 0 0;
  background: linear-gradient(#fff, #e3effb);
}

.ribbon {
  display: flex;
  flex: none;
  gap: 3px;
  height: 109px;
  padding: 1px 3px 4px;
  border-top: 1px solid #9dbbe3;
  border-bottom: 2px solid #8fb8e4;
  background: linear-gradient(#dbe7f5, #c9daee 20%, #dbe9f8 85%, #b9f0f6);
}

.group {
  display: flex;
  flex: none;
  flex-direction: column;
  border: 1px solid #a4bfdf;
  border-radius: 3px;
  background: linear-gradient(#dfe9f5, #d0dfef 18%, #c7d8ed 19%, #dceaf9 80%);
}

.group h2 {
  position: relative;
  height: 19px;
  background: #c1d8f0;
  color: #3e6aaa;
  font-size: 12px;
  line-height: 18px;
  text-align: center;
}

.group h2.launch {
  padding-right: 18px;
}

.group h2 svg {
  position: absolute;
  top: 4px;
  right: 4px;
  width: 8px;
  height: 8px;
}

.group--clip {
  width: 73px;
}

.group--font {
  width: 151px;
}

.group--align {
  width: 112px;
}

.group--number {
  width: 88px;
}

.group--styles {
  width: 116px;
}

.group--cells {
  width: 69px;
}

.group--edit {
  width: 110px;
}

.group__body {
  display: flex;
  flex: 1;
  flex-direction: column;
  gap: 2px;
  padding: 3px;
}

.group__body--align {
  gap: 3px;
  padding-top: 4px;
}

.group__body--clip {
  flex-direction: row;
  gap: 10px;
  padding: 4px 5px 4px 10px;
}

.paste {
  display: flex;
  flex-direction: column;
  align-items: center;
  gap: 6px;
}

.paste svg {
  width: 28px;
  height: 32px;
}

.stack {
  display: flex;
  flex-direction: column;
  gap: 6px;
}

.stack svg {
  display: block;
}

.line {
  display: flex;
  flex: none;
  gap: 4px;
  height: 22px;
}

.line--tall {
  gap: 1px;
  height: 26px;
}

.pick {
  display: flex;
  align-items: center;
  height: 25px;
  padding-right: 4px;
  border: 1px solid #abc6e8;
  background: #eaf2fb;
}

.pick select {
  flex: 1;
  min-width: 0;
  padding-left: 2px;
  color: #000;
}

.pick--face {
  width: 96px;
}

.pick--size {
  width: 47px;
}

.pick--kind {
  width: 80px;
}

.set {
  display: flex;
  height: 21px;
  border: 1px solid #9ab6dc;
  border-radius: 2px;
  background: linear-gradient(#dce8f6, #c3d6ee 50%, #d3e2f4);
}

.set button {
  display: flex;
  align-items: center;
  justify-content: center;
  gap: 4px;
  width: 22px;
  color: #222;
}

.set button + button {
  border-left: 1px solid #c0d2ea;
}

.set button.wide {
  width: 32px;
}

.set button.serif {
  font: 15px/16px "Liberation Serif", serif;
  font-weight: 700;
}

.set button.big {
  gap: 1px;
  font-size: 17px;
}

.set em {
  font-weight: 700;
}

.hot,
.set button.hot {
  background: linear-gradient(#fdd9a0, #fdb45a 50%, #ffe08c);
}

.tick {
  align-self: flex-start;
  width: 5px;
  height: 3px;
  margin-top: 4px;
  background: #2a5bb5;
  clip-path: polygon(50% 0, 100% 100%, 0 100%);
}

.tick--down {
  clip-path: polygon(0 0, 100% 0, 50% 100%);
}

.ink {
  width: 16px;
  border-bottom: 4px solid #f00;
  color: #2c5287;
  line-height: 13px;
}

.wen {
  display: flex;
  flex-direction: column;
  align-items: center;
  color: #2b56b8;
  line-height: 11px;
}

.wen small {
  color: #222;
  font-size: 9px;
  line-height: 7px;
}

.plain {
  display: flex;
  align-items: center;
  gap: 4px;
  padding-left: 2px;
}

.set button.digits {
  flex-direction: column;
  gap: 0;
  align-items: flex-end;
  padding-right: 3px;
  font: bold 9px/8px "Liberation Sans", sans-serif;
}

.digits em {
  color: #2a5bb5;
  font-style: normal;
}

.group__body--list {
  gap: 0;
  padding: 1px 6px;
}

.command {
  display: flex;
  align-items: center;
  gap: 3px;
  height: 22px;
  white-space: nowrap;
}

.command .drop {
  margin-left: 2px;
}

.sum {
  padding-left: 2px;
  color: #000;
  font-size: 15px;
}

.formula {
  display: flex;
  flex: none;
  align-items: center;
  height: 20px;
  border-bottom: 1px solid #6f8db5;
  background: #fff;
  color: #000;
  font: 13px/18px "Liberation Mono", monospace;
}

.formula__name {
  width: 140px;
  margin-right: 7px;
  text-align: center;
}

.formula__fx {
  display: flex;
  align-items: center;
  justify-content: space-between;
  width: 77px;
  height: 19px;
  padding: 0 6px 0 5px;
  border: 1px solid #7391bd;
  border-right-color: #567;
  border-radius: 9px 0 0 9px;
  background: linear-gradient(#dbe8f9, #a8c4ea 60%, #c9dcf5);
  color: #333;
  font: italic 16px/16px "Liberation Serif", serif;
}

.formula__fx i {
  width: 9px;
  height: 9px;
  border-radius: 50%;
  background: radial-gradient(circle at 30% 30%, #8e9aac, #f4f7fb);
}

.formula__text {
  flex: 1;
  min-width: 0;
  padding-left: 10px;
}

.sheet {
  position: relative;
  flex: 1;
  min-height: 0;
  padding-top: 4px;
  overflow: hidden;
  background: linear-gradient(#d4e3f5 4px, #fff 4px);
}

.sheet table {
  width: 100%;
  table-layout: fixed;
  border-collapse: separate;
  border-spacing: 0;
  color: #000;
  font: 300 16px/16px "Noto Sans CJK SC", sans-serif;
}

.sheet th,
.sheet td {
  height: 19px;
  padding: 0;
}

.sheet th {
  border: solid #9eb6ce;
  border-width: 0 1px 1px 0;
  background: #e4ecf7;
  color: #34495e;
  font: 13px/18px "Liberation Mono", monospace;
}

.sheet thead th {
  border-top: 1px solid #7f9dc0;
  background: linear-gradient(#f6f9fd, #d5dfec);
}

.sheet thead .corner {
  width: 34px;
  background: #a9c4e9;
}

.corner svg {
  display: block;
  width: 10px;
  height: 10px;
  margin: 4px 4px 0 auto;
}

.sheet .col-a {
  width: 148px;
}

.sheet thead .col-b {
  border-color: #e0953a;
  background: linear-gradient(#f8d69c, #f1b455);
}

.sheet .picked th {
  border-color: #e0953a;
  background: #fbc377;
}

.sheet td {
  border-bottom: 1px solid #000;
  vertical-align: top;
}

.sheet td:last-child {
  border-left: 2px solid #000;
}

.sheet td div {
  height: 18px;
  padding-left: 1px;
  white-space: pre;
}

.marked td:last-child {
  background: #ff0;
}

.picked td:last-child {
  box-shadow: inset 0 1px #10104c, inset 0 -2px #fff;
}

.half {
  font: 13px/14px "Liberation Mono", monospace;
  vertical-align: 1px;
}

.check {
  padding-left: 4px;
  font: italic 15px/14px "Liberation Serif", serif;
}

.callout {
  position: absolute;
  top: 362px;
  left: 130px;
  width: 158px;
  height: 50px;
  border: 2px solid #d326cf;
  box-shadow: 2px 3px 4px rgba(0, 0, 0, 0.5), inset 2px 3px 4px rgba(0, 0, 0, 0.3);
}

.sheetbar {
  display: flex;
  flex: none;
  align-items: center;
  height: 17px;
  border-bottom: 1px solid #5f86bd;
  background: #9ab6dd;
}

.sheetbar__nav {
  width: 63px;
  height: 16px;
  background: #d5e4f7;
}

.sheetbar__nav svg {
  display: block;
  width: 60px;
  height: 10px;
  margin-top: 3px;
}

.sheetbar__tab {
  width: 60px;
  height: 16px;
  padding-left: 9px;
  overflow: hidden;
  background: #f2f8ff;
  clip-path: polygon(0 0, 100% 0, 90% 100%, 4px 100%);
  font-size: 14px;
  line-height: 16px;
}

.sheetbar__new {
  width: 42px;
  height: 15px;
  padding-left: 12px;
  background: #cfe1f8;
  clip-path: polygon(25% 0, 100% 0, 75% 100%, 0 100%);
}

.sheetbar__new svg {
  width: 16px;
  height: 14px;
}

.sheetbar__split {
  width: 6px;
  height: 13px;
  margin-left: auto;
  border: 1px solid #fff;
  background: #4f6fa0;
  box-shadow: inset 0 0 0 1px #fff;
}

.sheetbar__left {
  width: 5px;
  height: 10px;
  margin: 0 9px 0 7px;
}

.sheetbar__thumb {
  display: grid;
  place-items: center;
  width: 196px;
  height: 15px;
  margin-right: 39px;
  border: 1px solid #5c779f;
  background: linear-gradient(#f2f6fb, #cfd9e6 50%, #b9c8da);
}

.sheetbar__thumb i {
  width: 7px;
  height: 7px;
  background: repeating-linear-gradient(90deg, #56647a 0 1px, transparent 1px 2px);
}

.status {
  display: flex;
  flex: none;
  align-items: center;
  height: 22px;
  border-bottom: 1px solid #5679a8;
  background: linear-gradient(#dbe8fa, #c2d8f6 35%, #b0ccf3 40%, #d3e3fa);
}

.status__ready {
  width: 40px;
  padding-left: 7px;
  border-right: 1px solid #8dabd6;
  line-height: 20px;
}

.status__right {
  display: flex;
  align-items: center;
  gap: 9px;
  width: 196px;
  height: 21px;
  margin-left: auto;
  padding-left: 5px;
  border-left: 2px solid #6c95cc;
  background: linear-gradient(#b8d2f5, #87b0e8 40%, #a9c8f2);
}

.views {
  display: flex;
  border: 1px solid #7596c6;
  background: #c9dcf5;
}

.views button {
  display: grid;
  place-items: center;
  width: 18px;
  height: 17px;
}

.views svg {
  width: 13px;
  height: 11px;
}

.status__minus {
  width: 14px;
  height: 14px;
  border: 1px solid #56749f;
  border-radius: 50%;
  background: #dce9fa;
}

/* Taskbar */
.taskbar {
  position: relative;
  display: flex;
  flex: none;
  align-items: stretch;
  height: 31px;
  border-top: 2px solid #0e2334;
  background: linear-gradient(90deg, #2a5f86, #4488ae 6%, #3f82ab 30%, #2f689b 62%, #24507f 78%, #16335c 90%, #1c3f66);
  color: #fff;
}

.start {
  flex: none;
  display: grid;
  place-items: center;
  width: 36px;
  height: 36px;
  margin: -4px 15px 0 9px;
  border: 1px solid #1c4a6b;
  border-radius: 50%;
  background: radial-gradient(circle at 50% 100%, #35d8f4, #2a7aa8 45%, #7ba2bb 80%, #b9cdd9);
}

.start svg {
  width: 23px;
  height: 23px;
}

.tasks {
  display: flex;
  gap: 2px;
}

.tasks__group {
  display: flex;
}

.task {
  display: flex;
  align-items: center;
  gap: 5px;
  width: 78px;
  height: 28px;
  padding-left: 6px;
  overflow: hidden;
  border: 1px solid rgba(205, 228, 242, 0.6);
  border-radius: 3px;
  background: linear-gradient(165deg, rgba(255, 255, 255, 0.5), rgba(255, 255, 255, 0.14) 50%, rgba(255, 255, 255, 0.06));
  white-space: nowrap;
}

.task--current {
  background: linear-gradient(165deg, rgba(255, 255, 255, 0.75), rgba(255, 255, 255, 0.4));
}

.task--bare {
  width: 38px;
  padding-left: 10px;
  border: 0;
  background: none;
}

.tray {
  display: flex;
  align-items: center;
  gap: 9px;
  margin-left: auto;
  padding-right: 16px;
}

.tray__help {
  width: 15px;
  height: 15px;
  border: 1px solid #c4cfe8;
  border-radius: 50%;
  background: #1818a8;
  font-weight: 700;
  line-height: 13px;
  text-align: center;
}

.tray__small {
  width: 9px;
  height: 16px;
}

.tray time {
  margin-left: 15px;
}

.peek {
  width: 14px;
  border: 1px solid #7791ab;
  background: linear-gradient(100deg, #6b86a3, #2b4a70);
}
</style>
